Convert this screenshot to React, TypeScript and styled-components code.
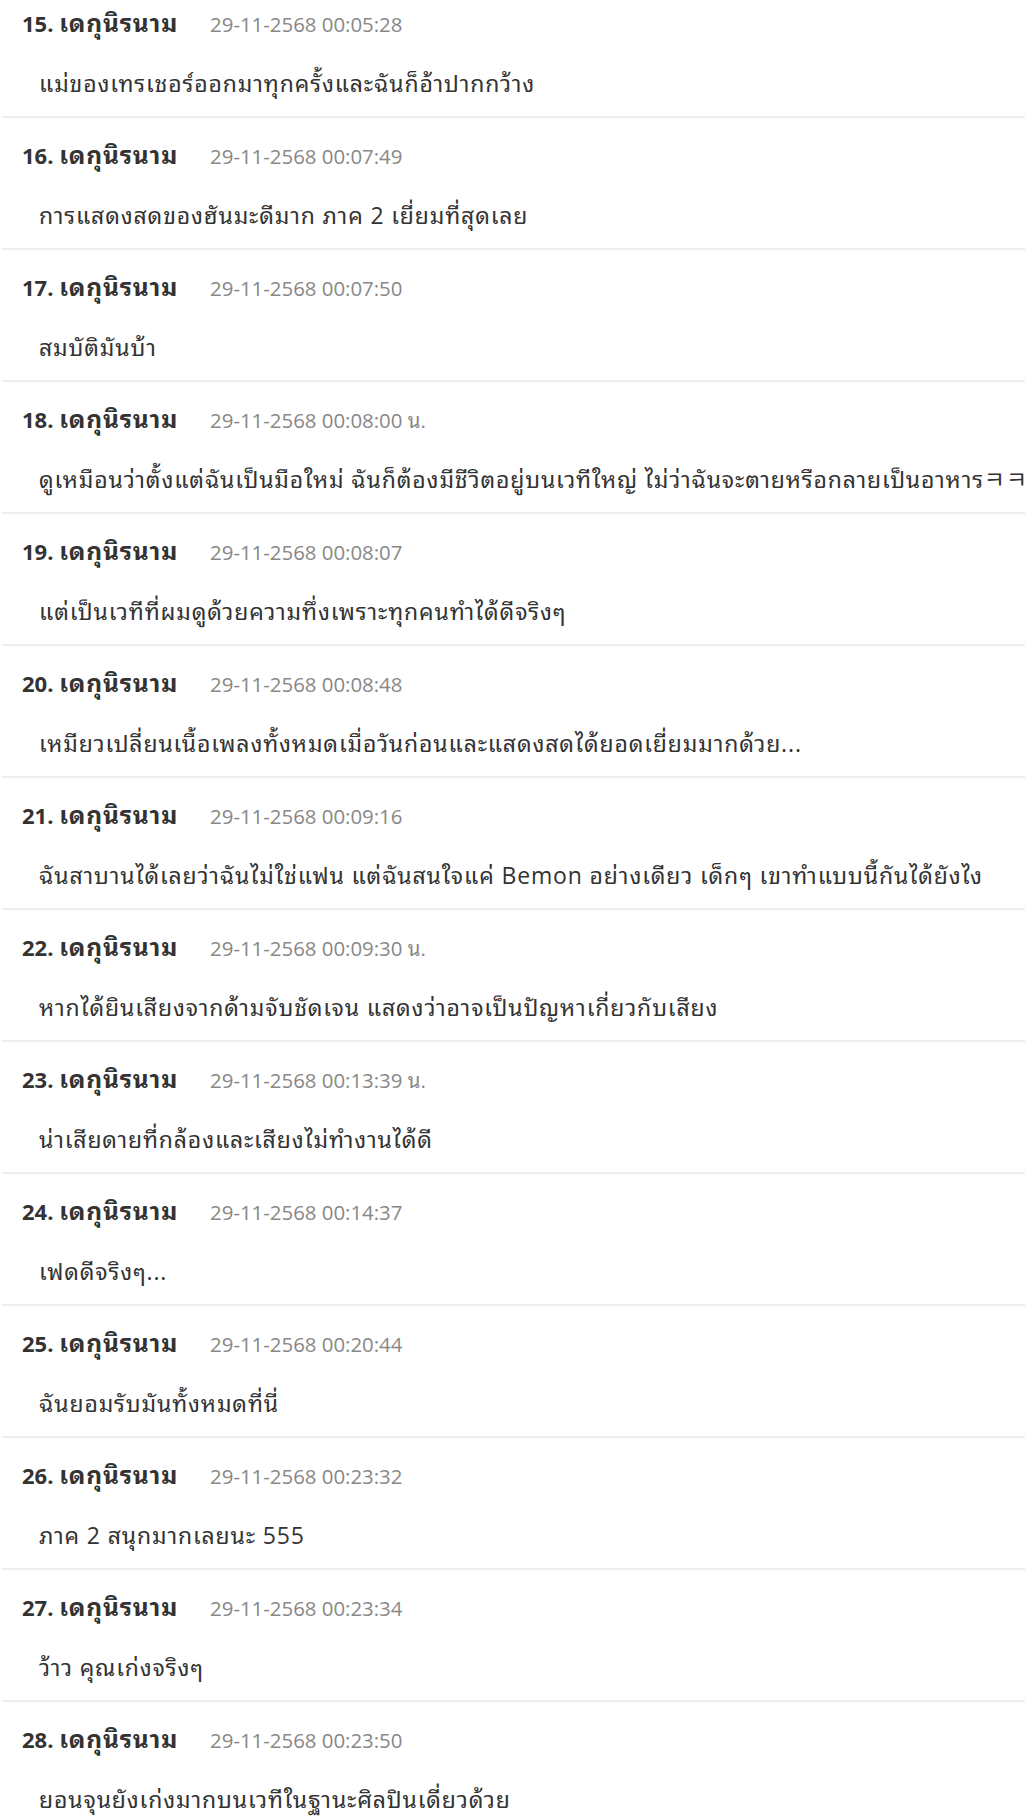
import React from "react";
import styled, { createGlobalStyle } from "styled-components";

const GlobalStyle = createGlobalStyle`
  html, body {
    margin: 0;
    padding: 0;
    background: #ffffff;
    overflow: hidden;
  }
  body {
    font-family: "Open Sans", "Noto Sans Thai Looped", "Noto Sans Thai", "Noto Sans", "Noto Sans CJK KR", sans-serif;
    color: #333333;
  }
`;

const List = styled.ul`
  list-style: none;
  margin: -14px 0 0 0;
  padding: 0 0 0 2px;
  width: 1200px;
`;

const Row = styled.li`
  padding: 22px 0 18px;
  border-bottom: 2px solid #eeeeee;
  white-space: nowrap;
`;

const Header = styled.div`
  display: flex;
  align-items: baseline;
  gap: 32px;
  padding-left: 20px;
  height: 30px;
  line-height: 30px;
`;

const Author = styled.span`
  font-size: 22px;
  font-weight: 700;
  color: #333333;
`;

const Name = styled.span`
  font-size: 24.5px;
  letter-spacing: 0.8px;
`;

const Stamp = styled.span`
  font-size: 20.4px;
  font-weight: 400;
  color: #888888;
`;

const Body = styled.p`
  margin: 30px 0 0;
  padding-left: 37px;
  font-size: 23px;
  letter-spacing: 0.85px;
  line-height: 30px;
  color: #333333;
`;

type Comment = { n: number; time: string; text: string };

const comments: Comment[] = [
  { n: 15, time: "29-11-2568 00:05:28", text: "แม่ของเทรเชอร์ออกมาทุกครั้งและฉันก็อ้าปากกว้าง" },
  { n: 16, time: "29-11-2568 00:07:49", text: "การแสดงสดของฮันมะดีมาก ภาค 2 เยี่ยมที่สุดเลย" },
  { n: 17, time: "29-11-2568 00:07:50", text: "สมบัติมันบ้า" },
  {
    n: 18,
    time: "29-11-2568 00:08:00 น.",
    text: "ดูเหมือนว่าตั้งแต่ฉันเป็นมือใหม่ ฉันก็ต้องมีชีวิตอยู่บนเวทีใหญ่ ไม่ว่าฉันจะตายหรือกลายเป็นอาหารㅋㅋ",
  },
  { n: 19, time: "29-11-2568 00:08:07", text: "แต่เป็นเวทีที่ผมดูด้วยความทึ่งเพราะทุกคนทำได้ดีจริงๆ" },
  { n: 20, time: "29-11-2568 00:08:48", text: "เหมียวเปลี่ยนเนื้อเพลงทั้งหมดเมื่อวันก่อนและแสดงสดได้ยอดเยี่ยมมากด้วย..." },
  {
    n: 21,
    time: "29-11-2568 00:09:16",
    text: "ฉันสาบานได้เลยว่าฉันไม่ใช่แฟน แต่ฉันสนใจแค่ Bemon อย่างเดียว เด็กๆ เขาทำแบบนี้กันได้ยังไง",
  },
  { n: 22, time: "29-11-2568 00:09:30 น.", text: "หากได้ยินเสียงจากด้ามจับชัดเจน แสดงว่าอาจเป็นปัญหาเกี่ยวกับเสียง" },
  { n: 23, time: "29-11-2568 00:13:39 น.", text: "น่าเสียดายที่กล้องและเสียงไม่ทำงานได้ดี" },
  { n: 24, time: "29-11-2568 00:14:37", text: "เฟดดีจริงๆ..." },
  { n: 25, time: "29-11-2568 00:20:44", text: "ฉันยอมรับมันทั้งหมดที่นี่" },
  { n: 26, time: "29-11-2568 00:23:32", text: "ภาค 2 สนุกมากเลยนะ 555" },
  { n: 27, time: "29-11-2568 00:23:34", text: "ว้าว คุณเก่งจริงๆ" },
  { n: 28, time: "29-11-2568 00:23:50", text: "ยอนจุนยังเก่งมากบนเวทีในฐานะศิลปินเดี่ยวด้วย" },
];

export default function App() {
  return (
    <>
      <GlobalStyle />
      <List>
        {comments.map((c) => (
          <Row key={c.n}>
            <Header>
              <Author>
                {c.n}. <Name>เดกุนิรนาม</Name>
              </Author>
              <Stamp>{c.time}</Stamp>
            </Header>
            <Body>{c.text}</Body>
          </Row>
        ))}
      </List>
    </>
  );
}
